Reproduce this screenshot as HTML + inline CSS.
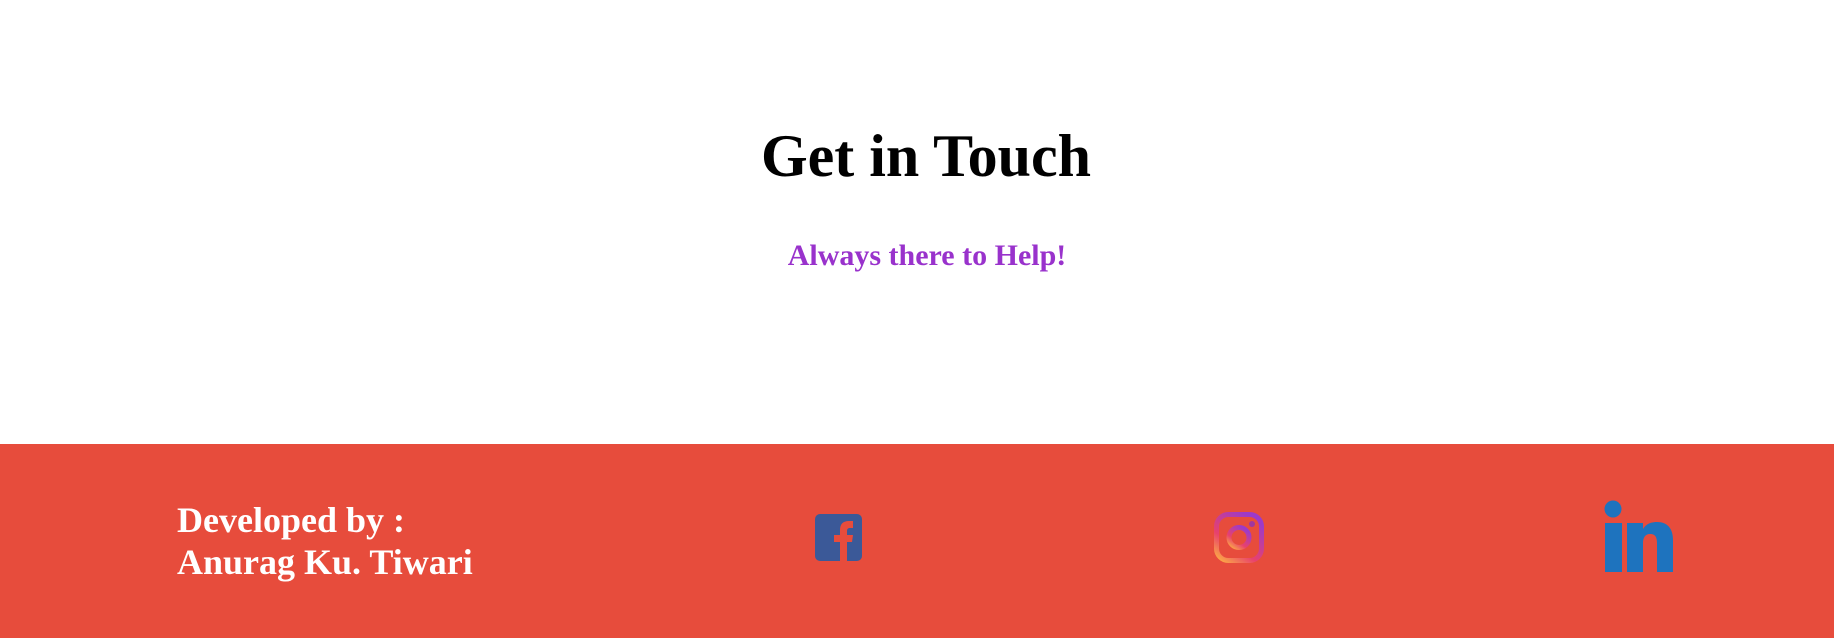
<!DOCTYPE html>
<html><head><meta charset="utf-8"><style>
html,body{margin:0;padding:0;width:1834px;height:641px;background:#fff;overflow:hidden;position:relative;font-family:"Liberation Serif",serif;}
h1{position:absolute;left:9px;width:1834px;top:116px;margin:0;text-align:center;font-size:60px;font-weight:bold;line-height:80px;color:#000;}
.sub{position:absolute;left:10px;width:1834px;top:238px;text-align:center;font-size:30px;font-weight:bold;color:#9932cc;line-height:36px;}
footer{position:absolute;left:0;top:444px;width:1834px;height:194px;background:#e74c3c;}
.dev{position:absolute;left:177px;top:55px;color:#fff;font-weight:bold;font-size:36px;line-height:42px;}
svg{position:absolute;}
</style></head><body>
<h1>Get in Touch</h1>
<div class="sub">Always there to Help!</div>
<footer>
<div class="dev">Developed by :<br>Anurag Ku. Tiwari</div>
<svg style="left:815px;top:70px" width="47" height="47" viewBox="0 0 47 47">
<rect width="47" height="47" rx="5" fill="#3b5998"/>
<path d="M25 47V28h-6v-7h6v-5c0-6 3-9 9-9h4v7h-3c-2 0-3 1-3 3v4h6l-1 7h-5v19z" fill="#e74c3c"/>
</svg>
<svg style="left:1214px;top:68px" width="50" height="51" viewBox="0 0 50 51">
<defs><linearGradient id="g" x1="0" y1="1" x2="0.7" y2="0"><stop offset="0" stop-color="#fdb043"/><stop offset="0.4" stop-color="#e8416d"/><stop offset="1" stop-color="#9c3ac9"/></linearGradient></defs>
<rect x="2.5" y="2.5" width="45" height="46" rx="12" fill="none" stroke="url(#g)" stroke-width="5"/>
<circle cx="25" cy="25.5" r="10" fill="none" stroke="url(#g)" stroke-width="5"/>
<circle cx="38" cy="12" r="3" fill="#a0369f"/>
</svg>
<svg style="left:1603px;top:56px" width="74" height="74" viewBox="0 0 74 74">
<circle cx="10" cy="9" r="8.5" fill="#1e73be"/>
<rect x="2" y="23" width="17" height="49" fill="#1e73be"/>
<path d="M24 23h16v6c3-5 8-7 14-7 10 0 16 6 16 18v32H54V43c0-6-2-9-7-9s-7 4-7 9v29H24z" fill="#1e73be"/>
</svg>
</footer>
</body></html>
